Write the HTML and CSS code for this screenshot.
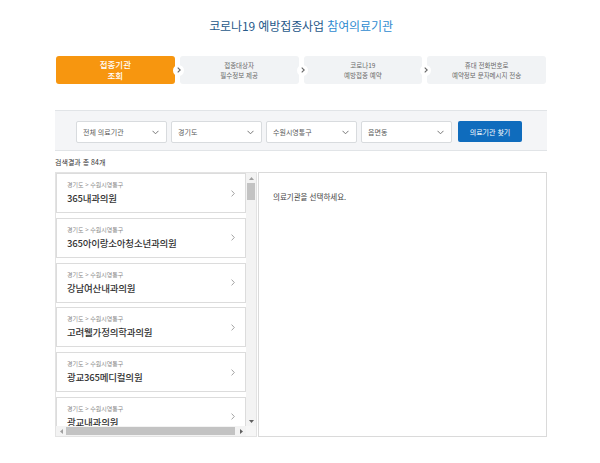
FILE: index.html
```html
<!DOCTYPE html>
<html lang="ko">
<head>
<meta charset="utf-8">
<title>코로나19 예방접종사업 참여의료기관</title>
<link rel="stylesheet" href="styles.css">
</head>
<body>
<div class="page">
  <h1 class="title">코로나19 예방접종사업 <span class="hl">참여의료기관</span></h1>

  <ol class="steps">
    <li class="step active">접종기관<br>조회</li>
    <li class="step"><span class="arrow"><svg width="4" height="6" viewBox="0 0 4 6"><path d="M0.7 0.6 L3.2 3 L0.7 5.4" fill="none" stroke="#666" stroke-width="1.1"/></svg></span>접종대상자<br>필수정보 제공</li>
    <li class="step"><span class="arrow"><svg width="4" height="6" viewBox="0 0 4 6"><path d="M0.7 0.6 L3.2 3 L0.7 5.4" fill="none" stroke="#666" stroke-width="1.1"/></svg></span>코로나19<br>예방접종 예약</li>
    <li class="step"><span class="arrow"><svg width="4" height="6" viewBox="0 0 4 6"><path d="M0.7 0.6 L3.2 3 L0.7 5.4" fill="none" stroke="#666" stroke-width="1.1"/></svg></span>휴대 전화번호로<br>예약정보 문자메시지 전송</li>
  </ol>

  <div class="filter">
    <div class="select"><span>전체 의료기관</span><svg width="7" height="5" viewBox="0 0 7 5"><path d="M0.5 0.8 L3.5 3.8 L6.5 0.8" fill="none" stroke="#777" stroke-width="1"/></svg></div>
    <div class="select"><span>경기도</span><svg width="7" height="5" viewBox="0 0 7 5"><path d="M0.5 0.8 L3.5 3.8 L6.5 0.8" fill="none" stroke="#777" stroke-width="1"/></svg></div>
    <div class="select"><span>수원시영통구</span><svg width="7" height="5" viewBox="0 0 7 5"><path d="M0.5 0.8 L3.5 3.8 L6.5 0.8" fill="none" stroke="#777" stroke-width="1"/></svg></div>
    <div class="select"><span>읍면동</span><svg width="7" height="5" viewBox="0 0 7 5"><path d="M0.5 0.8 L3.5 3.8 L6.5 0.8" fill="none" stroke="#777" stroke-width="1"/></svg></div>
    <button class="find" type="button">의료기관 찾기</button>
  </div>

  <p class="count">검색결과 총 84개</p>

  <div class="results">
    <div class="listbox">
      <div class="viewport">
        <ul class="list">
          <li class="item"><div class="info"><span class="path">경기도 &gt; 수원시영통구</span><span class="name">365내과의원</span></div><svg class="chev" width="4" height="7" viewBox="0 0 4 7"><path d="M0.6 0.6 L3.3 3.5 L0.6 6.4" fill="none" stroke="#999" stroke-width="0.9"/></svg></li>
          <li class="item"><div class="info"><span class="path">경기도 &gt; 수원시영통구</span><span class="name">365아이랑소아청소년과의원</span></div><svg class="chev" width="4" height="7" viewBox="0 0 4 7"><path d="M0.6 0.6 L3.3 3.5 L0.6 6.4" fill="none" stroke="#999" stroke-width="0.9"/></svg></li>
          <li class="item"><div class="info"><span class="path">경기도 &gt; 수원시영통구</span><span class="name">강남여산내과의원</span></div><svg class="chev" width="4" height="7" viewBox="0 0 4 7"><path d="M0.6 0.6 L3.3 3.5 L0.6 6.4" fill="none" stroke="#999" stroke-width="0.9"/></svg></li>
          <li class="item"><div class="info"><span class="path">경기도 &gt; 수원시영통구</span><span class="name">고려웰가정의학과의원</span></div><svg class="chev" width="4" height="7" viewBox="0 0 4 7"><path d="M0.6 0.6 L3.3 3.5 L0.6 6.4" fill="none" stroke="#999" stroke-width="0.9"/></svg></li>
          <li class="item"><div class="info"><span class="path">경기도 &gt; 수원시영통구</span><span class="name">광교365메디컬의원</span></div><svg class="chev" width="4" height="7" viewBox="0 0 4 7"><path d="M0.6 0.6 L3.3 3.5 L0.6 6.4" fill="none" stroke="#999" stroke-width="0.9"/></svg></li>
          <li class="item"><div class="info"><span class="path">경기도 &gt; 수원시영통구</span><span class="name">광교내과의원</span></div><svg class="chev" width="4" height="7" viewBox="0 0 4 7"><path d="M0.6 0.6 L3.3 3.5 L0.6 6.4" fill="none" stroke="#999" stroke-width="0.9"/></svg></li>
        </ul>
      </div>
      <div class="vbar">
        <span class="sbtn"><svg width="5" height="3" viewBox="0 0 5 3"><path d="M0 3 L2.5 0 L5 3 Z" fill="#a0a0a0"/></svg></span>
        <span class="vthumb"></span>
        <span class="sbtn end"><svg width="5" height="3" viewBox="0 0 5 3"><path d="M0 0 L2.5 3 L5 0 Z" fill="#606060"/></svg></span>
      </div>
      <div class="hbar">
        <span class="sbtn"><svg width="3" height="5" viewBox="0 0 3 5"><path d="M3 0 L0 2.5 L3 5 Z" fill="#a0a0a0"/></svg></span>
        <span class="hthumb"></span>
        <span class="sbtn end"><svg width="3" height="5" viewBox="0 0 3 5"><path d="M0 0 L3 2.5 L0 5 Z" fill="#606060"/></svg></span>
      </div>
      <div class="corner"></div>
    </div>
    <div class="detail">
      <p class="hint">의료기관을 선택하세요.</p>
    </div>
  </div>
</div>
</body>
</html>
```

FILE: styles.css
```css
html, body {
  margin: 0;
  padding: 0;
  background: #ffffff;
}

body {
  font-family: "Noto Sans CJK KR", "Noto Sans", "Liberation Sans", sans-serif;
  color: #333;
}

.page {
  width: 492px;
  margin: 0 0 0 55px;
}

.title {
  margin: 0;
  padding-top: 16px;
  font-size: 12px;
  line-height: 20px;
  font-weight: 400;
  text-align: center;
  color: #285a8a;
  letter-spacing: -0.1px;
}

.title .hl {
  color: #2f8bd0;
}

.steps {
  list-style: none;
  margin: 20px 0 0 1px;
  padding: 0;
  width: 490px;
  display: grid;
  grid-template-columns: repeat(4, 1fr);
  gap: 5px;
}

.step {
  position: relative;
  height: 28px;
  background: #f1f3f5;
  border-radius: 3px;
  display: flex;
  align-items: center;
  justify-content: center;
  text-align: center;
  font-size: 6.5px;
  line-height: 10px;
  color: #6a6a6a;
}

.step.active {
  background: #f7960f;
  color: #ffffff;
  font-size: 8.5px;
  line-height: 11px;
  font-weight: 500;
}

.arrow {
  position: absolute;
  left: -7px;
  top: 50%;
  width: 11px;
  height: 11px;
  margin-top: -5.5px;
  border-radius: 50%;
  background: #ffffff;
  display: flex;
  align-items: center;
  justify-content: center;
}

.arrow svg {
  display: block;
  margin-left: 1px;
}

.filter {
  margin-top: 26px;
  height: 41px;
  box-sizing: border-box;
  border-top: 1px solid #e1e4e7;
  border-bottom: 1px solid #e1e4e7;
  background: #f4f5f7;
  display: flex;
  align-items: flex-start;
  gap: 4px;
  padding: 10px 0 0 21px;
}

.select {
  width: 91px;
  height: 22px;
  box-sizing: border-box;
  border: 1px solid #d8dbde;
  border-radius: 2px;
  background: #ffffff;
  display: flex;
  align-items: center;
  justify-content: space-between;
  padding: 0 7px 0 6px;
  font-size: 7px;
  color: #5a5a5a;
}

.select svg {
  display: block;
}

.find {
  margin: 0 0 0 2px;
  width: 64px;
  height: 21px;
  border: 0;
  border-radius: 2px;
  background: #0f6cbd;
  color: #ffffff;
  font-family: inherit;
  font-size: 7px;
  padding: 0;
}

.count {
  margin: 5px 0 4px;
  font-size: 7px;
  line-height: 12px;
  color: #333;
}

.results {
  display: flex;
  gap: 1px;
  height: 265px;
}

.listbox {
  width: 202px;
  box-sizing: border-box;
  border: 1px solid #e3e3e3;
  display: grid;
  grid-template-columns: 190px 10px;
  grid-template-rows: 253px 10px;
}

.viewport {
  overflow: hidden;
}

.list {
  list-style: none;
  margin: 0;
  padding: 0;
}

.item {
  height: 40px;
  box-sizing: border-box;
  border: 1px solid #dcdcdc;
  margin-bottom: 4.8px;
  padding: 0 10px 0 10px;
  display: flex;
  align-items: center;
  justify-content: space-between;
  background: #ffffff;
}

.info {
  display: flex;
  flex-direction: column;
}

.path {
  font-size: 6px;
  line-height: 8px;
  color: #888;
}

.name {
  margin-top: 3px;
  font-size: 9.5px;
  line-height: 13px;
  font-weight: 500;
  color: #333;
  letter-spacing: -0.2px;
}

.chev {
  display: block;
  flex: none;
}

.vbar {
  background: #f3f3f3;
  display: flex;
  flex-direction: column;
  align-items: center;
}

.hbar {
  background: #f3f3f3;
  display: flex;
  align-items: center;
}

.sbtn {
  width: 10px;
  height: 10px;
  flex: none;
  display: flex;
  align-items: center;
  justify-content: center;
}

.sbtn svg {
  display: block;
}

.vbar .end {
  margin-top: auto;
}

.hbar .end {
  margin-left: auto;
}

.vthumb {
  width: 8px;
  height: 17px;
  background: #c3c3c3;
}

.hthumb {
  width: 169px;
  height: 8px;
  background: #c3c3c3;
}

.corner {
  background: #f6f6f6;
}

.detail {
  flex: 1;
  box-sizing: border-box;
  border: 1px solid #dadada;
  padding: 19px 14px;
}

.hint {
  margin: 0;
  font-size: 7.5px;
  line-height: 10px;
  color: #444;
}
```
